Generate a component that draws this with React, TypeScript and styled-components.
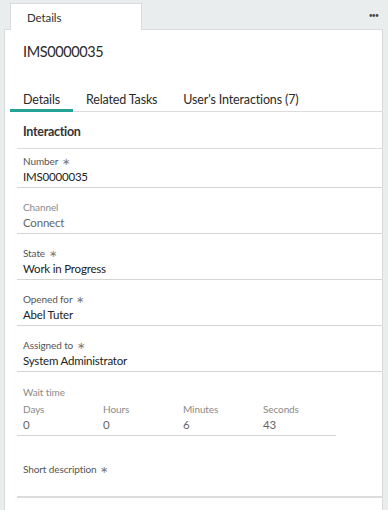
import styled, { createGlobalStyle } from 'styled-components';

const GlobalStyle = createGlobalStyle`
  html, body {
    margin: 0;
    padding: 0;
    background: #eaeded;
    font-family: Lato, "Open Sans", "Liberation Sans", sans-serif;
    color: #2e2e2e;
  }
`;

interface IField {
  label: string;
  value: string;
  required?: boolean;
  readOnly?: boolean;
}

const FIELDS: IField[] = [
  { label: 'Number', value: 'IMS0000035', required: true },
  { label: 'Channel', value: 'Connect', readOnly: true },
  { label: 'State', value: 'Work in Progress', required: true },
  { label: 'Opened for', value: 'Abel Tuter', required: true },
  { label: 'Assigned to', value: 'System Administrator', required: true },
];

const WAIT_TIME = [
  { unit: 'Days', value: '0' },
  { unit: 'Hours', value: '0' },
  { unit: 'Minutes', value: '6' },
  { unit: 'Seconds', value: '43' },
];

const TABS = ['Details', 'Related Tasks', "User's Interactions (7)"];

export default function App() {
  return (
    <S.Page>
      <GlobalStyle />
      <S.TopBar>
        <S.TopTab>Details</S.TopTab>
        <S.More>•••</S.More>
      </S.TopBar>
      <S.Panel>
        <S.Title>IMS0000035</S.Title>
        <S.Tabs>
          {TABS.map((tab, i) => (
            <S.Tab key={tab} $active={i === 0}>
              {tab}
            </S.Tab>
          ))}
        </S.Tabs>
        <S.SectionTitle>Interaction</S.SectionTitle>
        {FIELDS.map((field, i) => (
          <S.Field key={field.label} $first={i === 0}>
            <S.Label $readOnly={field.readOnly}>
              {field.label}
              {field.required && <S.Required>∗</S.Required>}
            </S.Label>
            <S.Value $readOnly={field.readOnly}>{field.value}</S.Value>
          </S.Field>
        ))}
        <S.WaitTime>
          <S.Label $readOnly>Wait time</S.Label>
          <S.WaitGrid>
            {WAIT_TIME.map(item => (
              <S.WaitCell key={item.unit}>
                <S.Label $readOnly>{item.unit}</S.Label>
                <S.Value $readOnly>{item.value}</S.Value>
              </S.WaitCell>
            ))}
          </S.WaitGrid>
        </S.WaitTime>
        <S.ShortDescription>
          <S.Label>
            Short description<S.Required>∗</S.Required>
          </S.Label>
        </S.ShortDescription>
      </S.Panel>
    </S.Page>
  );
}

const S = {
  Page: styled.div`
    width: 388px;
    height: 510px;
    overflow: hidden;
    background: #eaeded;
  `,

  TopBar: styled.div`
    display: flex;
    align-items: flex-end;
    justify-content: space-between;
    height: 29px;
    padding: 0 10px;
  `,

  TopTab: styled.div`
    position: relative;
    z-index: 1;
    box-sizing: border-box;
    width: 132px;
    height: 27px;
    margin-bottom: -1px;
    padding: 7px 0 0 16px;
    background: #fff;
    border: 1px solid #d8dcdc;
    border-bottom: none;
    font-size: 11.5px;
    letter-spacing: -0.1px;
    color: #333;
  `,

  More: styled.div`
    align-self: flex-start;
    margin-top: 11px;
    font-size: 7px;
    letter-spacing: -1px;
    color: #444;
  `,

  Panel: styled.div`
    box-sizing: border-box;
    margin: 0 5px 0 4px;
    height: 481px;
    background: #fff;
    border: 1px solid #d8dcdc;
    border-bottom: none;
  `,

  Title: styled.h1`
    box-sizing: border-box;
    margin: 0;
    padding: 12px 0 0 18px;
    height: 54px;
    font-size: 14.5px;
    line-height: 20px;
    font-weight: 400;
    letter-spacing: -0.4px;
    color: #2a2a2a;
  `,

  Tabs: styled.div`
    display: flex;
    margin-left: 5px;
    border-bottom: 1px solid #dcdcdc;
  `,

  Tab: styled.div<{ $active?: boolean }>`
    padding: 8px 13px 1px;
    margin-bottom: -1px;
    font-size: 12.5px;
    line-height: 16px;
    letter-spacing: -0.15px;
    color: #2a2a2a;
    border-bottom: 3px solid ${({ $active }) => ($active ? '#25a294' : 'transparent')};
  `,

  SectionTitle: styled.div`
    margin-left: 12px;
    padding: 12px 6px 8px;
    font-size: 12.5px;
    line-height: 16px;
    font-weight: 700;
    letter-spacing: -0.3px;
    color: #333;
    border-bottom: 1px solid #dcdcdc;
  `,

  Field: styled.div<{ $first?: boolean }>`
    margin-left: 12px;
    padding: ${({ $first }) => ($first ? '5px' : '12px')} 6px 2px;
    border-bottom: 1px solid #d4d4d4;
  `,

  Label: styled.div<{ $readOnly?: boolean }>`
    font-size: 10px;
    line-height: 14px;
    letter-spacing: -0.1px;
    color: ${({ $readOnly }) => ($readOnly ? '#8a8a8a' : '#555')};
  `,

  Required: styled.span`
    margin-left: 4px;
    color: #777;
  `,

  Value: styled.div<{ $readOnly?: boolean }>`
    margin-top: 1px;
    font-size: 11.5px;
    line-height: 16px;
    letter-spacing: -0.2px;
    color: ${({ $readOnly }) => ($readOnly ? '#666' : '#222')};
  `,

  WaitTime: styled.div`
    width: 307px;
    margin-left: 12px;
    padding: 13px 6px 2px;
    border-bottom: 1px solid #d4d4d4;
  `,

  WaitGrid: styled.div`
    display: grid;
    grid-template-columns: repeat(4, 80px);
    margin-top: 3px;
  `,

  WaitCell: styled.div`
    display: flex;
    flex-direction: column;
  `,

  ShortDescription: styled.div`
    margin-left: 12px;
    padding: 26px 6px 20px;
    border-bottom: 2px solid #dcdcdc;
  `,
};
